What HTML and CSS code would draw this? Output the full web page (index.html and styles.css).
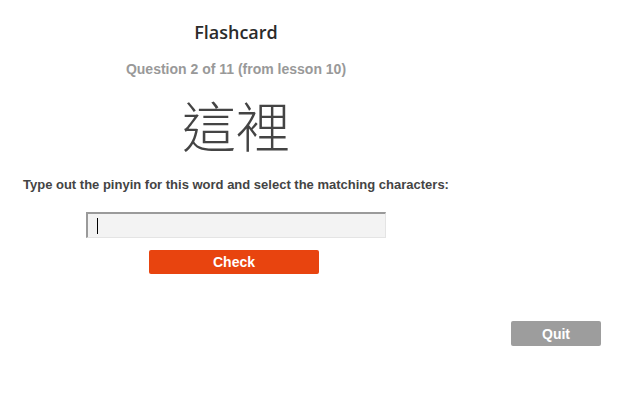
FILE: index.html
```html
<!DOCTYPE html>
<html>
<head>
<meta charset="utf-8">
<link rel="stylesheet" href="styles.css">
</head>
<body>
<div class="card">
  <h1 class="title">Flashcard</h1>
  <div class="subtitle">Question 2 of 11 (from lesson 10)</div>
  <div class="word">這裡</div>
  <div class="prompt">Type out the pinyin for this word and select the matching characters:</div>
  <div class="answer"><div class="input"><span class="caret"></span></div></div>
  <div class="actions"><button class="check">Check</button></div>
</div>
<div class="footer"><button class="quit">Quit</button></div>
</body>
</html>
```
FILE: styles.css
```css
html, body { margin: 0; padding: 0; background: #fff; }
body { font-family: "Liberation Sans", Arial, sans-serif; }
.card {
  width: 426px;
  margin-left: 8px;
  padding: 0 15px;
  display: flex;
  flex-direction: column;
  align-items: center;
}
.title {
  margin: 21px 0 0;
  font-family: "Open Sans", sans-serif;
  font-weight: 600;
  font-size: 18px;
  line-height: 22px;
  color: #2b2b2b;
}
.subtitle {
  margin-top: 18px;
  font-size: 14px;
  font-weight: bold;
  line-height: 17px;
  color: #999;
}
.word {
  margin-top: 16px;
  font-family: "Noto Sans CJK TC", "Noto Sans CJK SC", sans-serif;
  font-weight: 300;
  font-size: 54px;
  line-height: 62px;
  color: #444;
}
.prompt {
  align-self: stretch;
  margin-top: 21px;
  font-size: 13px;
  font-weight: bold;
  line-height: 16px;
  color: #444;
}
.answer { margin-top: 19px; }
.input {
  box-sizing: border-box;
  width: 300px;
  height: 26px;
  background: #f3f3f3;
  border: 2px solid #9a9a9a;
  border-right-color: #e4e4e4;
  border-bottom-color: #e4e4e4;
  border-right-width: 1px;
  border-bottom-width: 1px;
  display: flex;
  align-items: center;
  padding-left: 9px;
}
.caret { width: 1px; height: 16px; background: #000; }
.actions { margin-top: 12px; margin-right: 4px; }
.check {
  width: 170px;
  height: 24px;
  border: none;
  border-radius: 2px;
  background: #e8440f;
  color: #fff;
  font-family: "Liberation Sans", Arial, sans-serif;
  font-weight: bold;
  font-size: 14px;
  padding: 0;
}
.footer {
  display: flex;
  justify-content: flex-end;
  padding-right: 32px;
  margin-top: 47px;
}
.quit {
  width: 90px;
  height: 25px;
  border: none;
  border-radius: 2px;
  background: #9d9d9d;
  color: #fff;
  font-family: "Liberation Sans", Arial, sans-serif;
  font-weight: bold;
  font-size: 14px;
  padding: 0;
}
```
